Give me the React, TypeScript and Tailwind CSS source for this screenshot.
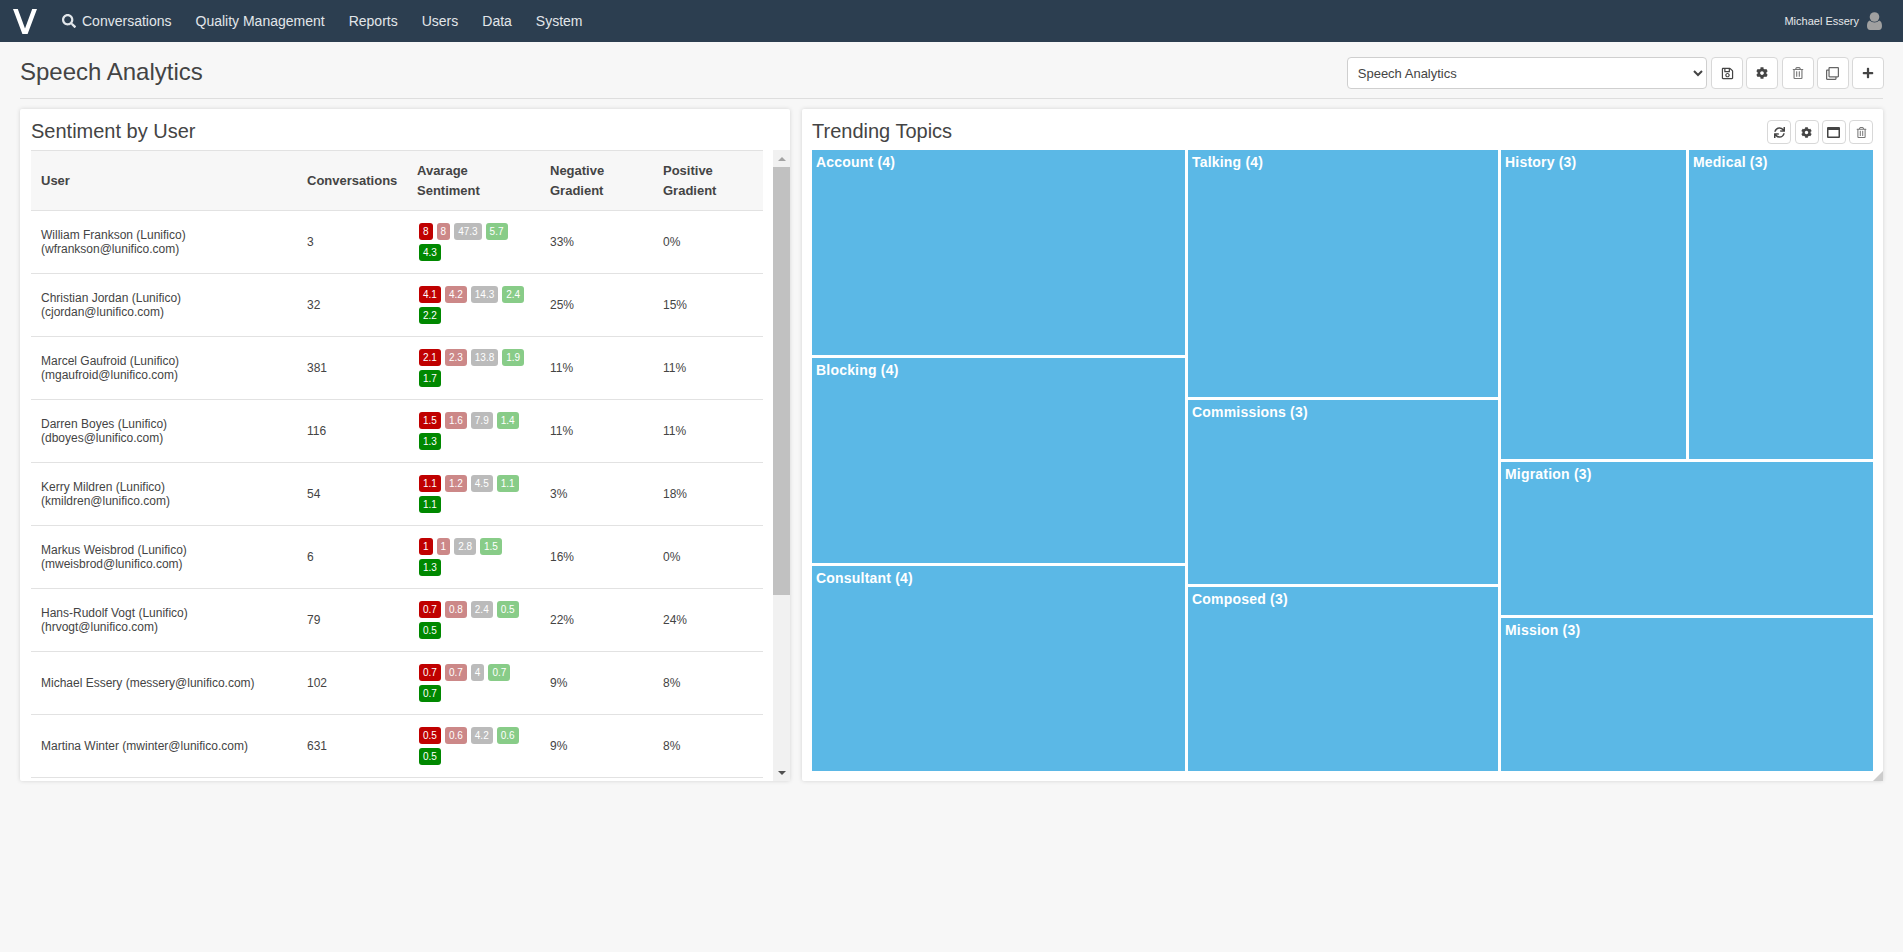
import { FaCog, FaPlus, FaRegClone, FaRegSave, FaRegTrashAlt, FaSearch, FaSync } from 'react-icons/fa'

const navItems = ['Quality Management', 'Reports', 'Users', 'Data', 'System']

const users = [
  { name: 'William Frankson (Lunifico)', email: '(wfrankson@lunifico.com)', conversations: 3, scores: ['8', '8', '47.3', '5.7', '4.3'], negative: '33%', positive: '0%' },
  { name: 'Christian Jordan (Lunifico)', email: '(cjordan@lunifico.com)', conversations: 32, scores: ['4.1', '4.2', '14.3', '2.4', '2.2'], negative: '25%', positive: '15%' },
  { name: 'Marcel Gaufroid (Lunifico)', email: '(mgaufroid@lunifico.com)', conversations: 381, scores: ['2.1', '2.3', '13.8', '1.9', '1.7'], negative: '11%', positive: '11%' },
  { name: 'Darren Boyes (Lunifico)', email: '(dboyes@lunifico.com)', conversations: 116, scores: ['1.5', '1.6', '7.9', '1.4', '1.3'], negative: '11%', positive: '11%' },
  { name: 'Kerry Mildren (Lunifico)', email: '(kmildren@lunifico.com)', conversations: 54, scores: ['1.1', '1.2', '4.5', '1.1', '1.1'], negative: '3%', positive: '18%' },
  { name: 'Markus Weisbrod (Lunifico)', email: '(mweisbrod@lunifico.com)', conversations: 6, scores: ['1', '1', '2.8', '1.5', '1.3'], negative: '16%', positive: '0%' },
  { name: 'Hans-Rudolf Vogt (Lunifico)', email: '(hrvogt@lunifico.com)', conversations: 79, scores: ['0.7', '0.8', '2.4', '0.5', '0.5'], negative: '22%', positive: '24%' },
  { name: 'Michael Essery (messery@lunifico.com)', email: '', conversations: 102, scores: ['0.7', '0.7', '4', '0.7', '0.7'], negative: '9%', positive: '8%' },
  { name: 'Martina Winter (mwinter@lunifico.com)', email: '', conversations: 631, scores: ['0.5', '0.6', '4.2', '0.6', '0.5'], negative: '9%', positive: '8%' },
]

const badgeColors = ['bg-[#c00000]', 'bg-[#cc8888]', 'bg-[#bbbbbb]', 'bg-[#88cc88]', 'bg-[#008800]']

function Tile({ label, className }: { label: string; className: string }) {
  return (
    <div className={`bg-[#5bb8e6] px-[4px] py-[4px] text-[14px] leading-[16px] font-bold tracking-[0.2px] text-white ${className}`}>
      {label}
    </div>
  )
}

function ToolButton({ children, small }: { children: React.ReactNode; small?: boolean }) {
  return (
    <button
      type="button"
      className={`flex items-center justify-center rounded-[4px] border border-[#d8d8d8] bg-white text-[#444] ${small ? 'h-[24px] w-[24px] text-[11px]' : 'h-[32px] w-[32px] text-[12px]'}`}
    >
      {children}
    </button>
  )
}

export default function App() {
  return (
    <div className="min-h-[952px] bg-[#f7f7f7] font-['Liberation_Sans',Arial,sans-serif] text-[#444]">
      <header className="flex h-[42px] items-center bg-[#2c3e50] pr-[21px] pl-[13px]">
        <svg viewBox="0 0 24 25" className="h-[25px] w-[24px]">
          <path d="M0 0h4.800l7.200 19.500 7.200-19.500h4.800l-9.400 25h-5.200z" fill="#fff" />
        </svg>
        <nav className="ml-[25px] flex items-center gap-[24px] text-[14px] text-[#e2e6ea]">
          <span className="flex items-center">
            <FaSearch className="mr-[6px] text-[14px]" />
            Conversations
          </span>
          {navItems.map(item => (
            <span key={item}>{item}</span>
          ))}
        </nav>
        <div className="ml-auto flex items-center gap-[8px]">
          <span className="text-[11px] text-[#e6e8ea]">Michael Essery</span>
          <svg viewBox="0 0 15 18" className="h-[18px] w-[15px]">
            <circle cx="7.500" cy="5" r="4.800" fill="#a0a0a0" />
            <path d="M2.800 8.500c1.200 1.300 2.900 2 4.700 2s3.500-.7 4.700-2c1.800.5 2.800 2.500 2.800 5.500 0 2.600-1.300 4-3 4h-9c-1.700 0-3-1.400-3-4 0-3 1-5 2.800-5.500z" fill="#a0a0a0" />
          </svg>
        </div>
      </header>

      <div className="px-[20px]">
        <div className="flex h-[57px] items-center justify-between border-b border-[#dedede] pt-[14px] pb-[8px]">
          <h1 className="mb-[3px] text-[24px] leading-[28px] text-[#444]">Speech Analytics</h1>
          <div className="-mr-[1px] flex items-center gap-[3.250px]">
            <select className="mr-[1px] h-[32px] w-[360px] rounded-[4px] border border-[#cfcfcf] bg-white pl-[6px] text-[13px] text-[#444]">
              <option>Speech Analytics</option>
            </select>
            <ToolButton><FaRegSave className="text-[13px]" /></ToolButton>
            <ToolButton><FaCog /></ToolButton>
            <ToolButton><FaRegTrashAlt className="text-[#777]" /></ToolButton>
            <ToolButton><FaRegClone className="text-[13px] text-[#666]" /></ToolButton>
            <ToolButton><FaPlus /></ToolButton>
          </div>
        </div>

        <div className="mt-[10px] flex gap-[12px]">
          <section className="h-[672px] w-[770px] rounded-[2px] bg-white pt-[10px] pl-[11px] shadow-[0_0_4px_rgba(0,0,0,0.15)]">
            <h2 className="h-[31px] text-[20px] leading-[24px] text-[#444]">Sentiment by User</h2>
            <div className="flex h-[631px]">
              <div className="w-[732px] overflow-hidden">
                <table className="w-[732px] table-fixed border-collapse text-[12px] leading-[14px]">
                  <colgroup>
                    <col className="w-[266px]" />
                    <col className="w-[110px]" />
                    <col className="w-[133px]" />
                    <col className="w-[113px]" />
                    <col className="w-[110px]" />
                  </colgroup>
                  <thead>
                    <tr className="h-[60px] border-y border-[#e2e2e2] bg-[#f7f7f7] text-left text-[13px] leading-[20px]">
                      <th className="px-[10px] font-bold">User</th>
                      <th className="px-[10px] font-bold">Conversations</th>
                      <th className="px-[10px] font-bold">Avarage<br />Sentiment</th>
                      <th className="px-[10px] font-bold">Negative<br />Gradient</th>
                      <th className="px-[10px] font-bold">Positive<br />Gradient</th>
                    </tr>
                  </thead>
                  <tbody>
                    {users.map(user => (
                      <tr key={user.name} className="h-[63px] border-b border-[#e2e2e2]">
                        <td className="px-[10px]">
                          {user.name}
                          {user.email && <br />}
                          {user.email}
                        </td>
                        <td className="px-[10px]">{user.conversations}</td>
                        <td className="px-[10px]">
                          <div className="flex max-w-[110px] flex-wrap gap-y-[4px]">
                            {user.scores.map((score, i) => (
                              <span
                                key={i}
                                className={`mx-[2px] h-[17px] rounded-[3px] px-[4px] text-[10px] leading-[17px] text-white ${badgeColors[i]}`}
                              >
                                {score}
                              </span>
                            ))}
                          </div>
                        </td>
                        <td className="px-[10px]">{user.negative}</td>
                        <td className="px-[10px]">{user.positive}</td>
                      </tr>
                    ))}
                  </tbody>
                </table>
              </div>
              <div className="ml-[10px] flex w-[17px] flex-col bg-[#f1f1f1]">
                <div className="flex h-[17px] items-center justify-center">
                  <div className="h-0 w-0 border-x-[4px] border-b-[4px] border-x-transparent border-b-[#a3a3a3]" />
                </div>
                <div className="h-[428px] bg-[#c1c1c1]" />
                <div className="mt-auto flex h-[17px] items-center justify-center">
                  <div className="h-0 w-0 border-x-[4px] border-t-[4px] border-x-transparent border-t-[#505050]" />
                </div>
              </div>
            </div>
          </section>

          <section className="relative h-[672px] w-[1081px] rounded-[2px] bg-white pt-[10px] pr-[10px] pl-[10px] shadow-[0_0_4px_rgba(0,0,0,0.15)]">
            <div className="flex h-[31px] justify-between">
              <h2 className="text-[20px] leading-[24px] text-[#444]">Trending Topics</h2>
              <div className="flex gap-[3.250px] pt-[1px]">
                <ToolButton small><FaSync /></ToolButton>
                <ToolButton small><FaCog /></ToolButton>
                <ToolButton small>
                  <svg viewBox="0 0 13 11" className="h-[11px] w-[13px]">
                    <path d="M1 0h11a1 1 0 0 1 1 1v9a1 1 0 0 1-1 1H1a1 1 0 0 1-1-1V1a1 1 0 0 1 1-1zm.500 3v6.500h10V3z" fill="#444" fillRule="evenodd" />
                  </svg>
                </ToolButton>
                <ToolButton small><FaRegTrashAlt className="text-[#777]" /></ToolButton>
              </div>
            </div>
            <div className="flex h-[621px] gap-[3px]">
              <div className="flex w-[373px] flex-col gap-[3px]">
                <Tile label="Account (4)" className="h-[205px]" />
                <Tile label="Blocking (4)" className="h-[205px]" />
                <Tile label="Consultant (4)" className="h-[205px]" />
              </div>
              <div className="flex w-[310px] flex-col gap-[3px]">
                <Tile label="Talking (4)" className="h-[247px]" />
                <Tile label="Commissions (3)" className="h-[184px]" />
                <Tile label="Composed (3)" className="h-[184px]" />
              </div>
              <div className="flex w-[372px] flex-col gap-[3px]">
                <div className="flex h-[309px] gap-[3px]">
                  <Tile label="History (3)" className="w-[185px]" />
                  <Tile label="Medical (3)" className="w-[184px]" />
                </div>
                <Tile label="Migration (3)" className="h-[153px]" />
                <Tile label="Mission (3)" className="h-[153px]" />
              </div>
            </div>
            <div className="absolute right-0 bottom-0 h-0 w-0 border-b-[10px] border-l-[10px] border-b-[#cccccc] border-l-transparent" />
          </section>
        </div>
      </div>
    </div>
  )
}
